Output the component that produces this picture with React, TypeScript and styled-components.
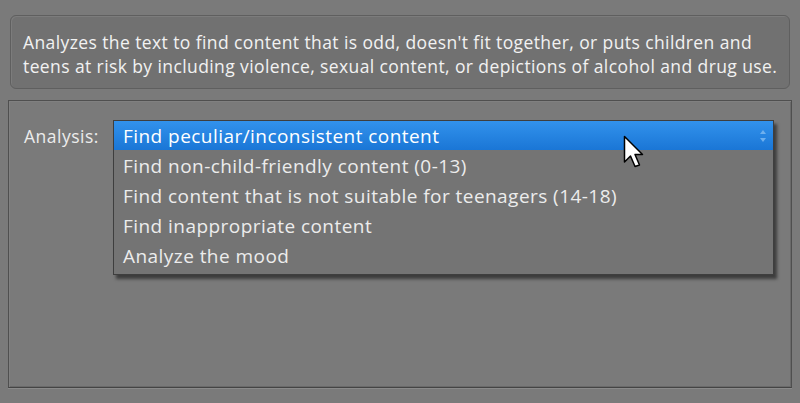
import React from 'react';
import styled, { createGlobalStyle } from 'styled-components';

const GlobalStyle = createGlobalStyle`
  html, body {
    margin: 0;
    padding: 0;
    background: #7a7a7a;
  }
  body {
    font-family: "Open Sans", "Noto Sans", "Liberation Sans", sans-serif;
  }
`;

const Page = styled.div`
  width: 800px;
  height: 403px;
  box-sizing: border-box;
  padding: 15px 8px 0;
  display: flex;
  flex-direction: column;
  gap: 11px;
  background: #7a7a7a;
`;

const Description = styled.div`
  margin: 0 2px;
  height: 74px;
  box-sizing: border-box;
  padding: 14px 10px 0 12px;
  background: #717171;
  border: 1px solid #5f5f5f;
  border-radius: 6px;
  box-shadow: inset 1px 1px 0 #7c7c7c;
  color: #f2f2f2;
  font-size: 17.5px;
  line-height: 24px;
  letter-spacing: 0.4px;
  white-space: nowrap;
`;

const Panel = styled.div`
  position: relative;
  height: 288px;
  box-sizing: border-box;
  border: 1px solid #4f4f4f;
  border-bottom-color: #444;
  box-shadow: inset 1px 1px 0 #808080, inset -1px -1px 0 #6a6a6a, 0 1px 0 #8a8a8a;
  padding: 19px 17px 0 15px;
  display: flex;
  align-items: flex-start;
`;

const Label = styled.div`
  width: 89px;
  flex: none;
  padding-top: 4px;
  color: #ececec;
  font-size: 17.5px;
  letter-spacing: 0.5px;
  line-height: 24px;
`;

const DropList = styled.div`
  flex: 1;
  background: #747474;
  border: 1px solid #3e3e3e;
  box-shadow: 3px 4px 3px rgba(40, 40, 40, 0.75);
  padding-bottom: 3px;
`;

const Option = styled.div<{ $selected?: boolean }>`
  position: relative;
  height: ${p => (p.$selected ? 29 : 30)}px;
  padding-left: 9px;
  display: flex;
  align-items: center;
  font-size: 19px;
  letter-spacing: 0.45px;
  color: ${p => (p.$selected ? '#ffffff' : '#ececec')};
  background: ${p => (p.$selected ? 'linear-gradient(#3292ec, #1a76d6)' : 'transparent')};
  margin-bottom: ${p => (p.$selected ? 1 : 0)}px;
`;

const Spinner = styled.svg`
  position: absolute;
  right: 6px;
  top: 8px;
`;

const Cursor = styled.svg`
  position: absolute;
  left: 614px;
  top: 34px;
`;

const options = [
  'Find non-child-friendly content (0-13)',
  'Find content that is not suitable for teenagers (14-18)',
  'Find inappropriate content',
  'Analyze the mood',
];

export default function App() {
  return (
    <>
      <GlobalStyle />
      <Page>
        <Description>
          Analyzes the text to find content that is odd, doesn't fit together, or puts children and
          <br />
          teens at risk by including violence, sexual content, or depictions of alcohol and drug use.
        </Description>
        <Panel>
          <Label>Analysis:</Label>
          <DropList>
            <Option $selected>
              Find peculiar/inconsistent content
              <Spinner width="8" height="14" viewBox="0 0 8 14">
                <path d="M1 5 L4 1 L7 5 Z" fill="#6fb0ee" />
                <path d="M1 9 L4 13 L7 9 Z" fill="#6fb0ee" />
              </Spinner>
            </Option>
            {options.map(o => (
              <Option key={o}>{o}</Option>
            ))}
          </DropList>
          <Cursor width="24" height="36" viewBox="0 0 16 24">
            <path
              d="M1 1 L1 18 L5 14 L8 21 L11 20 L8 13 L13 13 Z"
              fill="#ffffff"
              stroke="#000000"
              strokeWidth="1"
              strokeLinejoin="round"
            />
          </Cursor>
        </Panel>
      </Page>
    </>
  );
}
